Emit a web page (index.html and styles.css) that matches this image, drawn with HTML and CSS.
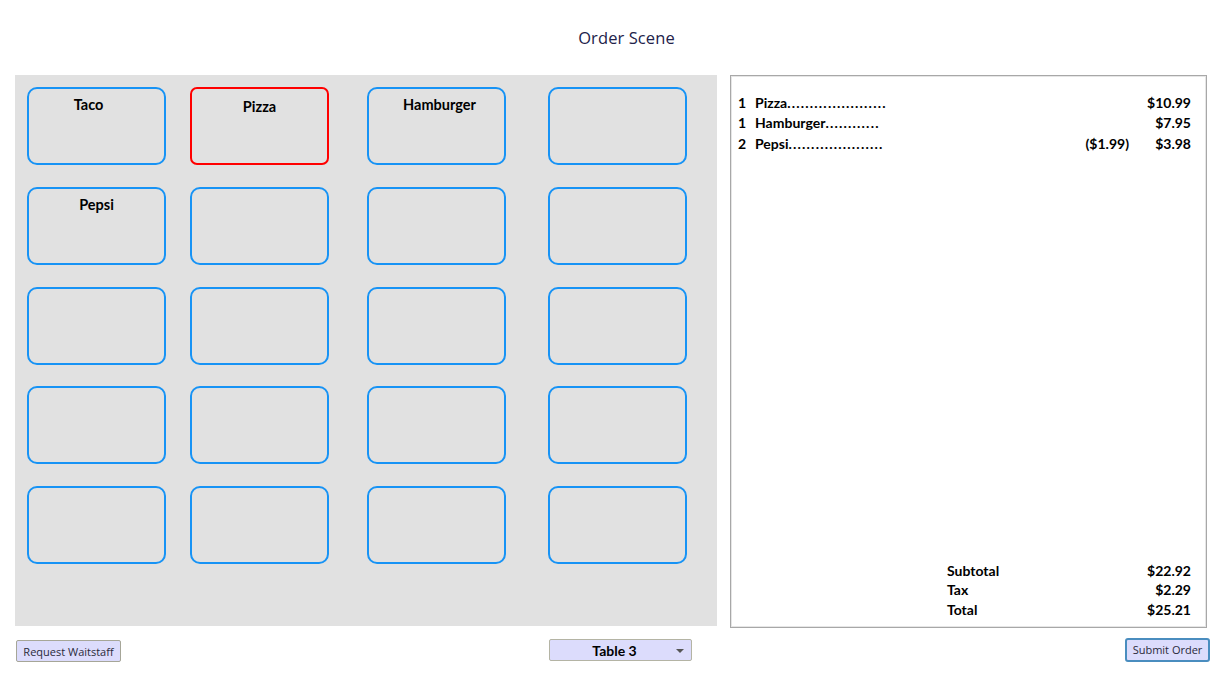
FILE: index.html
```html
<!DOCTYPE html>
<html>
<head>
<meta charset="utf-8">
<title>Order Scene</title>
<link rel="stylesheet" href="styles.css">
</head>
<body>
<div class="app">
  <header class="title-bar"><h1 class="title">Order Scene</h1></header>
  <main class="main">
    <section class="menu-grid">
      <div class="tile"><span class="tile-label label-taco">Taco</span></div>
      <div class="tile tile-selected"><span class="tile-label">Pizza</span></div>
      <div class="tile"><span class="tile-label label-hamburger">Hamburger</span></div>
      <div class="tile"></div>
      <div class="tile"><span class="tile-label">Pepsi</span></div>
      <div class="tile"></div>
      <div class="tile"></div>
      <div class="tile"></div>
      <div class="tile"></div>
      <div class="tile"></div>
      <div class="tile"></div>
      <div class="tile"></div>
      <div class="tile"></div>
      <div class="tile"></div>
      <div class="tile"></div>
      <div class="tile"></div>
      <div class="tile"></div>
      <div class="tile"></div>
      <div class="tile"></div>
      <div class="tile"></div>
    </section>
    <section class="receipt">
      <div class="items">
        <span class="qty">1</span><span class="name">Pizza<span class="leader">......................</span></span><span class="each"></span><span class="price">$10.99</span>
        <span class="qty">1</span><span class="name">Hamburger<span class="leader">............</span></span><span class="each"></span><span class="price">$7.95</span>
        <span class="qty">2</span><span class="name">Pepsi<span class="leader">.....................</span></span><span class="each">($1.99)</span><span class="price">$3.98</span>
      </div>
      <div class="totals">
        <span class="t-label">Subtotal</span><span class="t-value">$22.92</span>
        <span class="t-label">Tax</span><span class="t-value">$2.29</span>
        <span class="t-label">Total</span><span class="t-value">$25.21</span>
      </div>
    </section>
  </main>
  <footer class="footer">
    <button class="btn btn-request">Request Waitstaff</button>
    <div class="dropdown"><span class="dropdown-text">Table 3</span><span class="dropdown-arrow"></span></div>
    <button class="btn btn-submit">Submit Order</button>
  </footer>
</div>
</body>
</html>
```

FILE: styles.css
```css
* { box-sizing: border-box; }
html, body { margin: 0; padding: 0; background: #ffffff; }
body { font-family: Lato, "Open Sans", sans-serif; color: #000; }
.app { width: 1221px; height: 685px; }

.title-bar { height: 75px; display: flex; align-items: center; justify-content: center; padding-left: 32px; }
.title { margin: 0; font-family: "Open Sans", sans-serif; font-weight: 400; font-size: 16.5px; color: #22224a; letter-spacing: 0.1px; }

.main { display: flex; align-items: flex-start; padding-left: 15px; gap: 13px; }

.menu-grid {
  width: 702px; height: 551px; background: #e1e1e1;
  display: grid;
  grid-template-columns: 163px 177px 181px 139px;
  grid-template-rows: repeat(5, 78px);
  row-gap: 21.75px;
  padding: 12px 0 0 12px;
  align-content: start;
}
.tile {
  width: 139px; height: 78px;
  border: 2px solid #1793f5; border-radius: 10px;
  display: flex; justify-content: center; align-items: flex-start;
  padding-top: 7px;
}
.tile-selected { border-color: #ff0000; border-width: 2px; border-radius: 7px; padding-top: 9px; }
.tile-label { font-weight: 700; font-size: 14.5px; line-height: 18px; }
.label-taco { margin-right: 16px; }
.label-hamburger { margin-left: 6px; }

.receipt {
  width: 477px; height: 553px;
  border: 1px solid #a8a8a8;
  box-shadow: inset 0 0 0 1px #e6e6e6;
  display: flex; flex-direction: column; justify-content: space-between;
  padding: 16px 15px 8px 7px;
  font-weight: 700; font-size: 14px;
}
.items {
  display: grid;
  grid-template-columns: 17px 1fr auto 62px;
  grid-auto-rows: 20.5px;
  align-items: center;
}
.leader { letter-spacing: 1.2px; }
.each, .price { text-align: right; }
.totals {
  display: grid;
  grid-template-columns: 1fr auto;
  grid-auto-rows: 19.5px;
  align-items: center;
  padding-left: 209px;
}
.t-value { text-align: right; }

.footer { display: flex; align-items: center; height: 44px; }
.btn {
  font-family: "Open Sans", sans-serif; font-size: 11px; color: #2a2a3a;
  background: #dcdcfc; cursor: pointer; margin: 0; padding: 0;
}
.btn-request { margin-left: 16px; width: 105px; height: 22px; border: 1px solid #a6a698; border-radius: 2px; margin-top: 2px; }
.dropdown {
  margin-left: 428px; width: 143px; height: 22px;
  background: #dcdcfc; border: 1px solid #b4b4a4; border-radius: 2px;
  display: flex; align-items: center; justify-content: center; position: relative;
}
.dropdown-text { font-weight: 700; font-size: 14px; margin-left: -12px; }
.dropdown-arrow {
  position: absolute; right: 7px; top: 9px;
  width: 0; height: 0;
  border-left: 4px solid transparent; border-right: 4px solid transparent; border-top: 4px solid #555;
}
.btn-submit { margin-left: auto; margin-right: 11px; width: 85px; height: 24px; border: 2px solid #4a8dbf; border-radius: 3px; margin-top: -1px; }
```
